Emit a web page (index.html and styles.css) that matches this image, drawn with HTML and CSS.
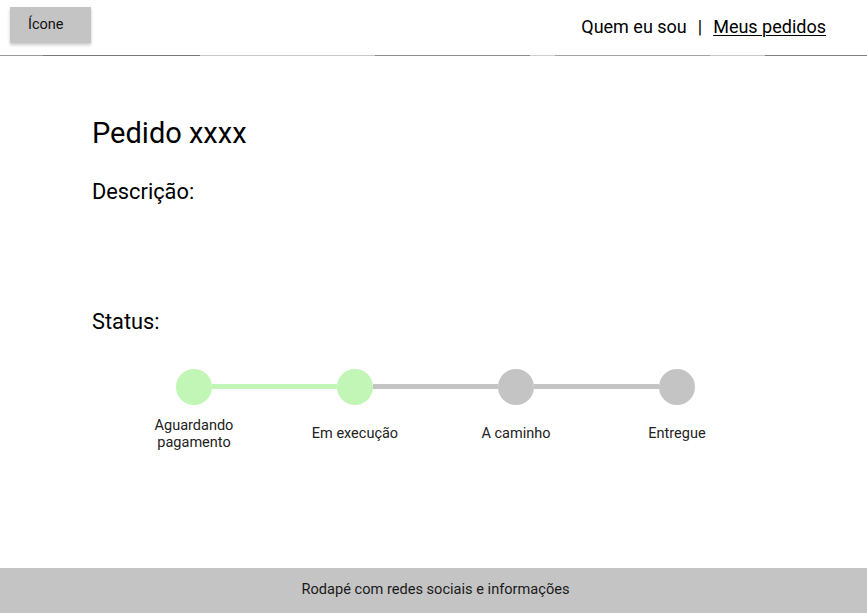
FILE: index.html
```html
<!DOCTYPE html>
<html lang="pt-BR">
<head>
<meta charset="utf-8">
<title>Pedido</title>
<link rel="stylesheet" href="styles.css">
</head>
<body>
<header class="header">
  <div class="logo-btn">Ícone</div>
  <nav class="nav">
    <span class="nav-link">Quem eu sou</span>
    <span class="nav-sep">|</span>
    <span class="nav-link nav-current">Meus pedidos</span>
  </nav>
</header>
<div class="rule"></div>
<main class="main">
  <h1 class="title">Pedido xxxx</h1>
  <h2 class="section-title">Descrição:</h2>
  <div class="description"></div>
  <h2 class="section-title">Status:</h2>
  <div class="stepper">
    <div class="track">
      <span class="dot dot-done"></span>
      <span class="bar bar-done"></span>
      <span class="dot dot-done"></span>
      <span class="bar"></span>
      <span class="dot"></span>
      <span class="bar"></span>
      <span class="dot"></span>
    </div>
    <div class="labels">
      <span class="label">Aguardando<br>pagamento</span>
      <span class="label">Em execução</span>
      <span class="label">A caminho</span>
      <span class="label">Entregue</span>
    </div>
  </div>
</main>
<footer class="footer">Rodapé com redes sociais e informações</footer>
</body>
</html>
```

FILE: styles.css
```css
* { box-sizing: border-box; }
html, body { height: 100%; }
body {
  margin: 0;
  font-family: Roboto, "Liberation Sans", sans-serif;
  color: #111;
  background: #fff;
  display: flex;
  flex-direction: column;
  min-height: 100vh;
}
.header {
  height: 55px;
  display: flex;
  justify-content: space-between;
  align-items: flex-start;
  padding: 7px 41px 0 10px;
}
.logo-btn {
  width: 81px;
  height: 36px;
  background: #c4c4c4;
  box-shadow: 0 2px 3px rgba(0,0,0,0.22);
  font-size: 14.5px;
  line-height: 36px;
  padding-left: 18px;
  color: #111;
}
.nav {
  padding-top: 8.5px;
  font-size: 18px;
  line-height: 21px;
  color: #000;
  display: flex;
}
.nav-sep { padding: 0 11px; }
.nav-current { text-decoration: underline; text-underline-offset: 2px; text-decoration-thickness: 1px; }
.rule {
  height: 1px;
  background: linear-gradient(to right,
    #9a9a9a 0, #9a9a9a 43px,
    #7a7a7a 43px, #7a7a7a 200px,
    #c8c8c8 200px, #c8c8c8 375px,
    #8c8c8c 375px, #8c8c8c 530px,
    #d0d0d0 530px, #d0d0d0 555px,
    #a2a2a2 555px, #a2a2a2 710px,
    #c8c8c8 710px, #c8c8c8 765px,
    #808080 765px, #808080 100%);
}
.main {
  flex: 1;
  padding: 61px 0 0 92px;
}
.title {
  margin: 0;
  font-size: 29px;
  line-height: 33px;
  font-weight: 400;
  color: #000;
}
.section-title {
  margin: 28.5px 0 0;
  font-size: 21.8px;
  line-height: 26px;
  font-weight: 400;
  color: #000;
}
.description { height: 76px; }
.stepper { margin-top: 33.5px; }
.track {
  display: flex;
  align-items: center;
  margin-left: 84px;
}
.dot {
  width: 36px;
  height: 36px;
  border-radius: 50%;
  background: #c4c4c4;
  flex: none;
}
.dot-done { background: #c1f6b6; }
.bar {
  width: 125px;
  height: 5px;
  background: #c4c4c4;
  flex: none;
}
.bar-done { background: #c1f6b6; }
.labels {
  display: grid;
  grid-template-columns: repeat(4, 161px);
  align-items: center;
  margin: 12px 0 0 21.5px;
}
.label {
  text-align: center;
  font-size: 14.5px;
  line-height: 17px;
  color: #222;
}
.footer {
  height: 45px;
  background: #c4c4c4;
  text-align: center;
  font-size: 14.6px;
  line-height: 43px;
  padding-left: 4px;
  color: #1a1a1a;
}
```
